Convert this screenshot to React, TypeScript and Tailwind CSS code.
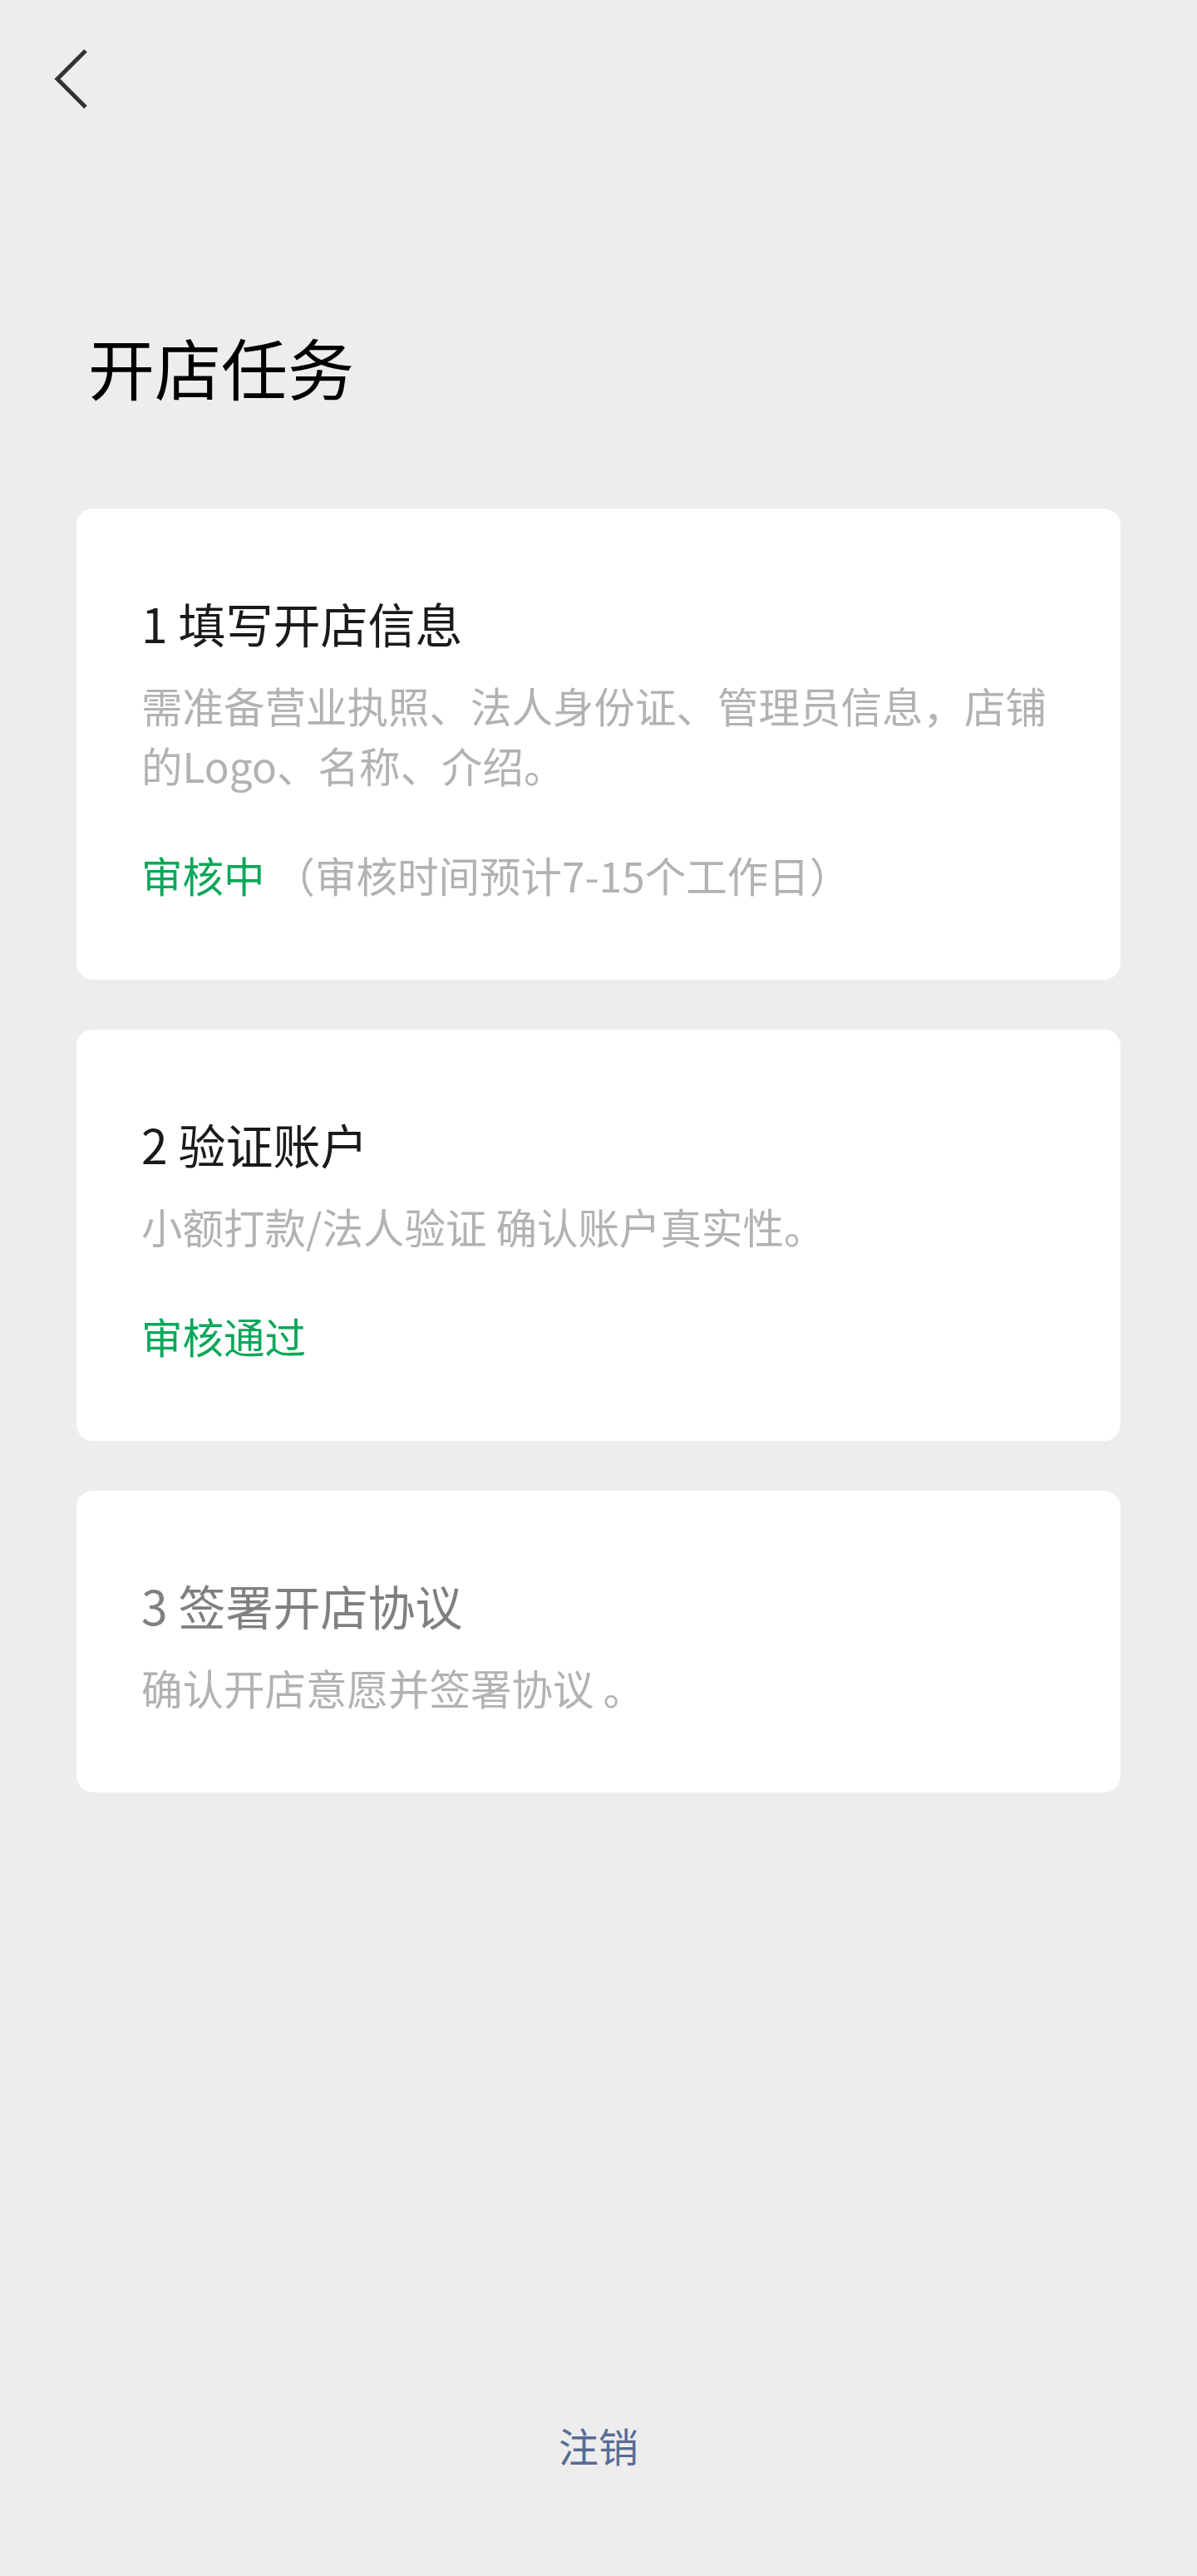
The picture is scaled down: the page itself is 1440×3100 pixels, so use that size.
import React from 'react';

type Task = {
  title: string;
  desc: string;
  status?: string;
  note?: string;
  disabled?: boolean;
};

const tasks: Task[] = [
  {
    title: '1 填写开店信息',
    desc: '需准备营业执照、法人身份证、管理员信息，店铺的Logo、名称、介绍。',
    status: '审核中',
    note: ' （审核时间预计7-15个工作日）',
  },
  {
    title: '2 验证账户',
    desc: '小额打款/法人验证 确认账户真实性。',
    status: '审核通过',
  },
  {
    title: '3 签署开店协议',
    desc: '确认开店意愿并签署协议 。',
    disabled: true,
  },
];

function TaskCard({ task }: { task: Task }) {
  return (
    <div className="bg-white rounded-[20px] px-[78px] pt-[100px] pb-[90px]">
      <h2
        className={
          task.disabled
            ? 'text-[57px] leading-[74px] text-[#808080]'
            : 'text-[57px] leading-[74px] text-[#1a1a1a]'
        }
      >
        {task.title}
      </h2>
      <p className="mt-[27px] text-[49.5px] leading-[72px] text-[#b2b2b2]">{task.desc}</p>
      {task.status && (
        <p className="mt-[60px] text-[49.5px] leading-[72px]">
          <span className="text-[#0ba75a]">{task.status}</span>
          {task.note && <span className="text-[#b2b2b2]">{task.note}</span>}
        </p>
      )}
    </div>
  );
}

export default function App() {
  return (
    <div className="min-h-[3100px] bg-[#ededed] flex flex-col font-['Noto_Sans_CJK_SC',sans-serif]">
      <div className="h-[190px] flex items-center pl-[64px]">
        <svg width="46" height="76" viewBox="0 0 46 76" fill="none">
          <path d="M39 4 L5 38 L39 72" stroke="#333333" strokeWidth="5" />
        </svg>
      </div>

      <h1 className="mt-[200px] ml-[106px] text-[80px] leading-[100px] text-black">开店任务</h1>

      <div className="mt-[122px] px-[92px] flex flex-col gap-[60px]">
        {tasks.map((t) => (
          <TaskCard key={t.title} task={t} />
        ))}
      </div>

      <div className="mt-auto pb-[126px] text-center">
        <a href="#" className="text-[48px] leading-[64px] text-[#576b95]">
          注销
        </a>
      </div>
    </div>
  );
}
